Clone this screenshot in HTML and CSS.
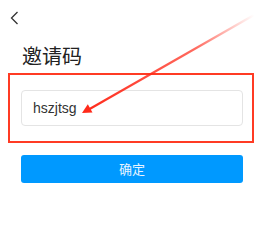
FILE: index.html
```html
<!DOCTYPE html>
<html lang="zh">
<head>
    <meta charset="UTF-8">
    <meta name="viewport" content="width=device-width, initial-scale=1.0">
    <title>邀请码</title>
    <link rel="stylesheet" href="styles.css">
</head>
<body>
    <div class="page">
        <div class="topbar">
            <svg class="back" width="10" height="16" viewBox="0 0 10 16">
                <polyline points="7.5,2 1.5,8 7.5,14" fill="none" stroke="#333" stroke-width="1.3"/>
            </svg>
        </div>
        <h1 class="title">邀请码</h1>
        <!-- highlighted area -->
        <div class="mark-box">
            <div class="code-input">hszjtsg</div>
        </div>
        <div class="btn">确定</div>

        <!-- annotation arrow -->
        <svg class="arrow" width="265" height="242" viewBox="0 0 265 242">
            <defs>
                <linearGradient id="fade" x1="254" y1="15" x2="86" y2="111" gradientUnits="userSpaceOnUse">
                    <stop offset="0" stop-color="#ff2a1a" stop-opacity="0"/>
                    <stop offset="0.35" stop-color="#ff2a1a" stop-opacity="0.7"/>
                    <stop offset="1" stop-color="#ff2a1a"/>
                </linearGradient>
            </defs>
            <line x1="254" y1="15" x2="87" y2="110.5" stroke="url(#fade)" stroke-width="2.2"/>
            <polygon points="82,113 92.5,112.5 87.8,104.3" fill="#ff2a1a"/>
        </svg>
    </div>
</body>
</html>
```

FILE: styles.css
```css
* {
    margin: 0;
    box-sizing: border-box;
}
body {
    background: #fff;
    font-family: "Noto Sans", "Noto Sans CJK SC", sans-serif;
    overflow: hidden;
}
.page {
    position: relative;
    width: 265px;
    height: 242px;
}

.topbar {
    height: 41px;
    padding: 10px 0 0 10px;
}
.back {
    display: block;
}

.title {
    font-size: 20px;
    font-weight: 400;
    color: #222;
    line-height: 26px;
    padding-left: 22px;
    margin-top: 3px;
}

.mark-box {
    margin: 3px 11px 0 8px;
    border: 2px solid #ff3b24;
    padding: 15px 9px 15px 11px;
}

.code-input {
    height: 36px;
    border: 1px solid #e4e4e4;
    border-radius: 4px;
    padding-left: 11px;
    font-family: "Liberation Sans", "Noto Sans CJK SC", sans-serif;
    font-size: 14px;
    line-height: 34px;
    color: #333;
}

.btn {
    margin: 12px 22px 0 21px;
    height: 28px;
    background: #0099ff;
    border-radius: 3px;
    color: #e8f4ff;
    font-size: 13px;
    line-height: 28px;
    text-align: center;
}

.arrow {
    position: absolute;
    top: 0;
    left: 0;
    pointer-events: none;
}
```
